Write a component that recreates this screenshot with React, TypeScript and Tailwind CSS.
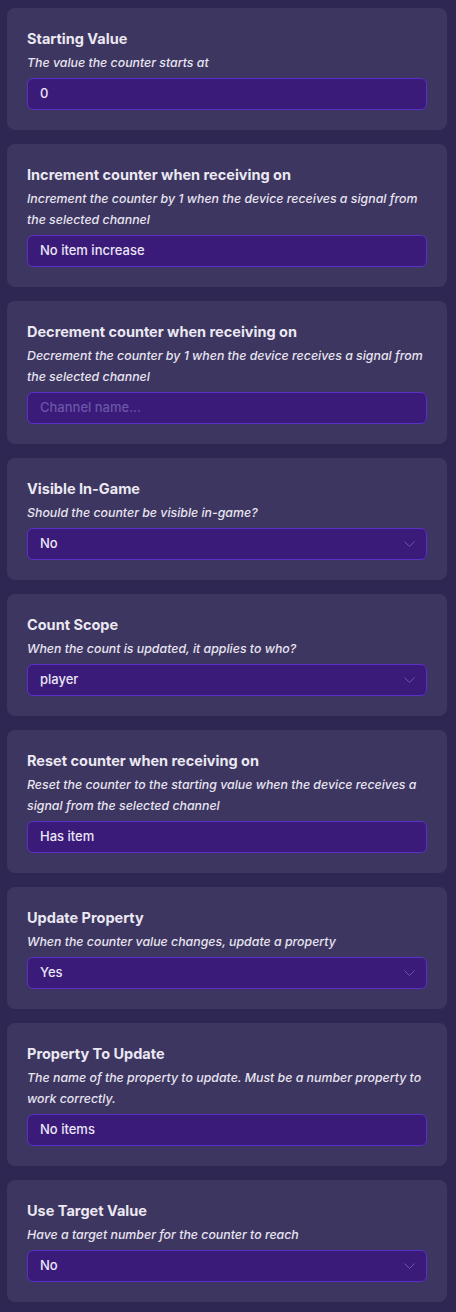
import { ReactNode } from 'react'

type Field = {
  title: string
  desc: string
  kind: 'text' | 'select'
  value?: string
  placeholder?: string
}

const FIELDS: Field[] = [
  { title: 'Starting Value', desc: 'The value the counter starts at', kind: 'text', value: '0' },
  {
    title: 'Increment counter when receiving on',
    desc: 'Increment the counter by 1 when the device receives a signal from the selected channel',
    kind: 'text',
    value: 'No item increase',
  },
  {
    title: 'Decrement counter when receiving on',
    desc: 'Decrement the counter by 1 when the device receives a signal from the selected channel',
    kind: 'text',
    placeholder: 'Channel name...',
  },
  { title: 'Visible In-Game', desc: 'Should the counter be visible in-game?', kind: 'select', value: 'No' },
  { title: 'Count Scope', desc: 'When the count is updated, it applies to who?', kind: 'select', value: 'player' },
  {
    title: 'Reset counter when receiving on',
    desc: 'Reset the counter to the starting value when the device receives a signal from the selected channel',
    kind: 'text',
    value: 'Has item',
  },
  { title: 'Update Property', desc: 'When the counter value changes, update a property', kind: 'select', value: 'Yes' },
  {
    title: 'Property To Update',
    desc: 'The name of the property to update. Must be a number property to work correctly.',
    kind: 'text',
    value: 'No items',
  },
  { title: 'Use Target Value', desc: 'Have a target number for the counter to reach', kind: 'select', value: 'No' },
]

function Chevron() {
  return (
    <svg width="11" height="6" viewBox="0 0 11 6" fill="none" className="shrink-0">
      <path d="M0.5 0.5 L5.5 5.5 L10.5 0.5" stroke="#6e56a8" strokeWidth="1" />
    </svg>
  )
}

function Box({ children }: { children: ReactNode }) {
  return (
    <div className="mt-[5px] flex h-8 items-center justify-between rounded-md border border-[#5a30c8] bg-[#3a1b7a] pl-3 pr-[11px] text-[13px] font-medium text-[#ebe6f5]">
      {children}
    </div>
  )
}

function FieldCard({ f }: { f: Field }) {
  return (
    <div className="rounded-lg bg-[#3d3660] px-5 py-5">
      <h2 className="text-[14.5px] font-bold leading-[22px] text-[#ebe8f2]">{f.title}</h2>
      <p className="mt-[2px] text-[12.35px] font-medium italic leading-[21px] text-[#e8e4f0]">{f.desc}</p>
      <Box>
        {f.value ? (
          <span>{f.value}</span>
        ) : (
          <span className="text-[#6c55a6]">{f.placeholder}</span>
        )}
        {f.kind === 'select' && <Chevron />}
      </Box>
    </div>
  )
}

export default function App() {
  return (
    <div
      className="min-h-[1312px] bg-[#2e2754] pb-[10px] pl-[7px] pr-[9px] pt-2"
      style={{ fontFamily: 'Inter, "Noto Sans", sans-serif' }}
    >
      <div className="flex flex-col gap-[14px]">
        {FIELDS.map(f => (
          <FieldCard key={f.title} f={f} />
        ))}
      </div>
    </div>
  )
}
